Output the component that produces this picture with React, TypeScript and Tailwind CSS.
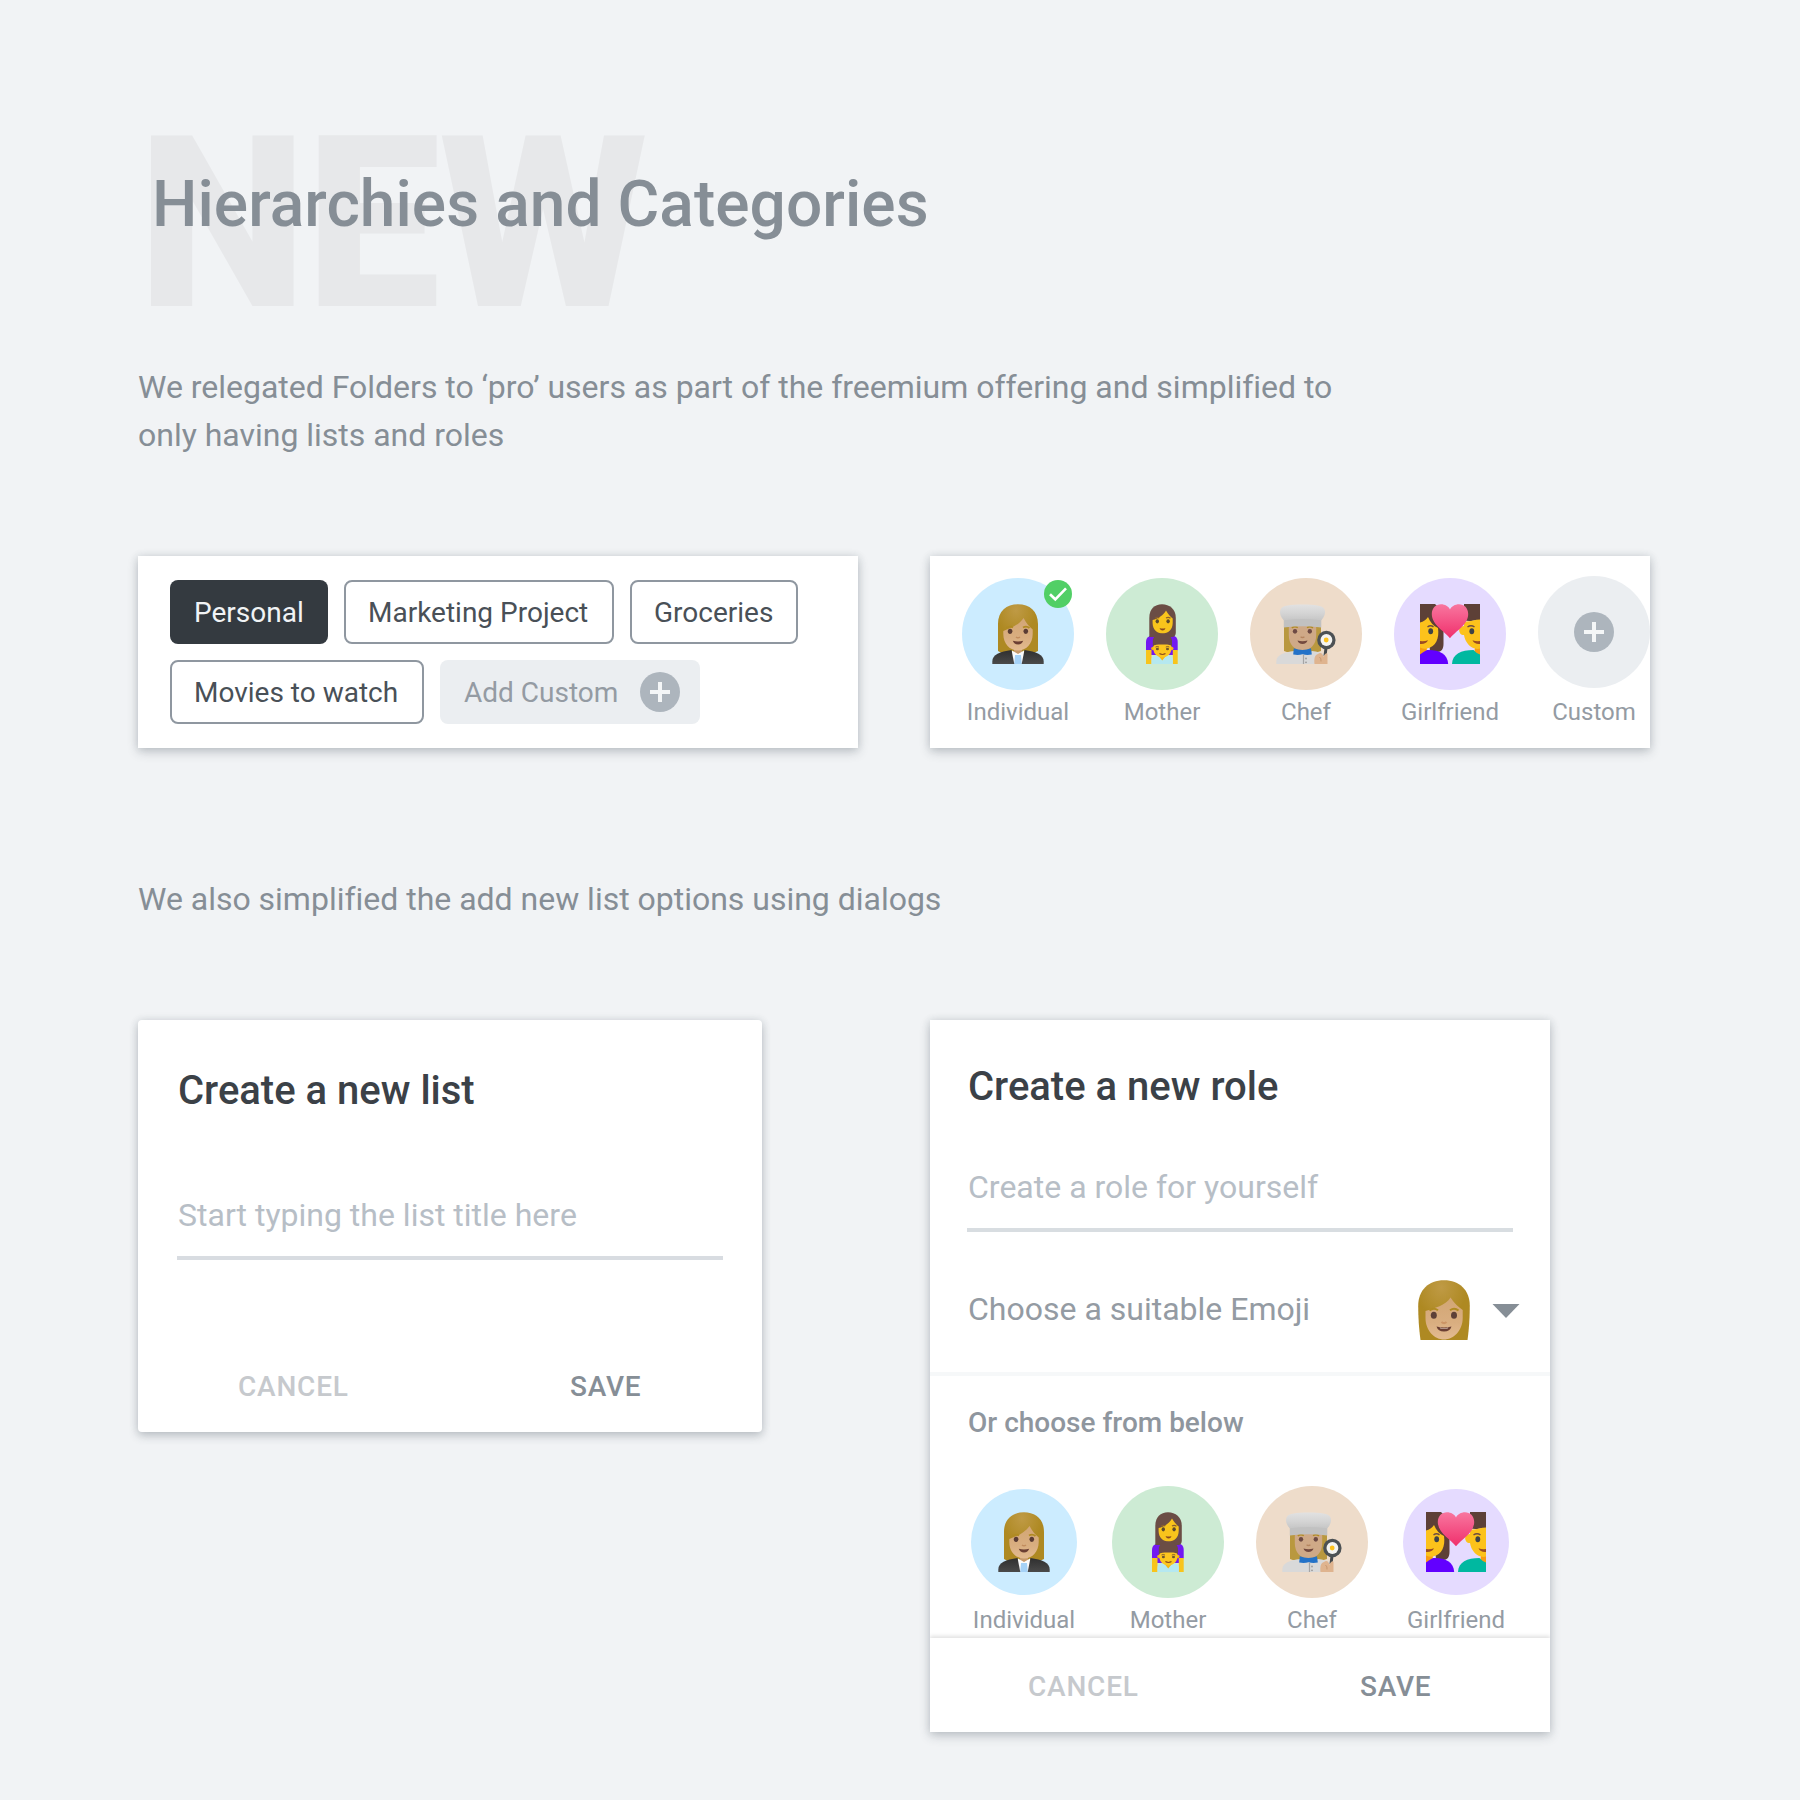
import type { ReactNode } from "react";

const cardShadow =
  "bg-white shadow-[0_4px_10px_rgba(52,62,75,0.24),0_0_8px_rgba(52,62,75,0.12)]";

function Defs() {
  return (
    <svg width="0" height="0" className="absolute">
      <defs>
        <radialGradient id="blonde" cx="0.45" cy="0.12" r="0.5">
          <stop offset="0" stopColor="#bf9a45" />
          <stop offset="1" stopColor="#ae8922" />
        </radialGradient>
        <linearGradient id="skin" x1="0" y1="0" x2="0" y2="1">
          <stop offset="0" stopColor="#d2a675" />
          <stop offset="0.6" stopColor="#d9ae80" />
          <stop offset="1" stopColor="#e3bb91" />
        </linearGradient>
        <linearGradient id="hat" x1="0" y1="0" x2="0" y2="1">
          <stop offset="0" stopColor="#e2e2e2" />
          <stop offset="0.6" stopColor="#d3d3d3" />
          <stop offset="1" stopColor="#c6c6c6" />
        </linearGradient>
        <linearGradient id="heart" x1="0" y1="0" x2="0" y2="1">
          <stop offset="0" stopColor="#f8769f" />
          <stop offset="1" stopColor="#f02f6c" />
        </linearGradient>
        <linearGradient id="suit" x1="0" y1="0" x2="0" y2="1">
          <stop offset="0" stopColor="#2f2f2f" />
          <stop offset="1" stopColor="#4a4a4a" />
        </linearGradient>
      </defs>
    </svg>
  );
}

function Emoji({ children }: { children: ReactNode }) {
  return (
    <svg viewBox="0 0 60 60" className="block size-[60px] shrink-0">
      {children}
    </svg>
  );
}

function OfficeWoman() {
  return (
    <Emoji>
      <path d="M10 47V20C10 7 18.500 0.200 30 0.200S50 7 50 20V47Q45 50 40 49H20Q14 50 10 47Z" fill="url(#blonde)" />
      <path d="M26 42H34V53H26Z" fill="#c79a6b" />
      <path d="M15.300 27C22 24.500 31 21 35.600 14C38 19 41.500 23 44.700 25.500V30C44.700 40 38 46.500 30 46.500S15.300 40 15.300 30Z" fill="url(#skin)" />
      <path d="M18.500 24Q21.500 21.500 25 23.500M35 23.500Q38.500 21.500 41.500 24" stroke="#b08b22" strokeWidth="1.800" fill="none" />
      <ellipse cx="22.100" cy="27.300" rx="2.300" ry="2.600" fill="#5a3c34" />
      <ellipse cx="37.800" cy="27.300" rx="2.300" ry="2.600" fill="#5a3c34" />
      <path d="M28 33Q30 34.600 32 33" stroke="#c28d5e" strokeWidth="1.600" fill="none" />
      <path d="M24.800 36.800Q30 38 35.200 36.800Q34 40.400 30 40.400T24.800 36.800Z" fill="#6b3f33" />
      <path d="M24 46.500L30 50L36 46.500L38 60H22Z" fill="#fbfbfb" />
      <path d="M27 51H33L33.800 60H26.200Z" fill="#a5d2f7" />
      <path d="M4.300 60V57.500C4.300 50.500 12 47.600 23.500 46L26.300 60Z" fill="url(#suit)" />
      <path d="M55.700 60V57.500C55.700 50.500 48 47.600 36.500 46L33.700 60Z" fill="url(#suit)" />
    </Emoji>
  );
}

function BlondeWoman() {
  return (
    <Emoji>
      <path d="M6.500 60C5 49 4.200 38 4.200 26C4.200 10 14.500 0.200 30 0.200S55.800 10 55.800 26C55.800 38 55 49 53.500 60Z" fill="url(#blonde)" />
      <path d="M11.500 31C20 28.500 32 25 36.500 17.500C40 23 45 27.500 48.700 30V38C48.700 51 39 59.500 30 59.500S11.500 51 11.500 38Z" fill="url(#skin)" />
      <path d="M15.500 30.600Q19.500 27 24 30.200M36 30.200Q40.500 27 44.500 30.600" stroke="#b08b22" strokeWidth="2" fill="none" />
      <ellipse cx="19.800" cy="35.200" rx="3" ry="3.500" fill="#5d4037" />
      <ellipse cx="40" cy="35.200" rx="3" ry="3.500" fill="#5d4037" />
      <path d="M27.500 42Q30 44.300 32.500 42" stroke="#cb9465" strokeWidth="2" fill="none" />
      <path d="M22.500 46.500Q30 48.600 37.500 46.500Q36 51.500 30 51.500T22.500 46.500Z" fill="#6b3f33" />
      <path d="M25.500 47.500Q30 48.600 34.500 47.500L33.500 48.400H26.500Z" fill="#f4e6dc" />
    </Emoji>
  );
}

function MotherAndSon() {
  return (
    <Emoji>
      <path d="M14 46V38C14 33 18 31 23 31H38C42.500 31 45.700 33 45.700 38V46L41 51H19Z" fill="#7218f2" />
      <path d="M17.300 33V14C17.300 5 22.500 0.200 30 0.200S43.800 5 43.800 14V29Q43.500 33 40 33Z" fill="#6b4d45" />
      <path d="M20.600 16C26 15 31.500 11 34 6.500C36 10 38.500 13 40.700 14.500V19C40.700 25.500 36 29.500 30.600 29.500S20.600 25.500 20.600 19Z" fill="#f8c41c" />
      <path d="M23 14.200Q25.300 12.600 27.300 14M34 14Q36.300 12.600 38.500 14.200" stroke="#8a5f2c" strokeWidth="1.100" fill="none" />
      <ellipse cx="25.300" cy="17.300" rx="1.700" ry="2.100" fill="#5c4a2c" />
      <ellipse cx="36.100" cy="17.300" rx="1.700" ry="2.100" fill="#5c4a2c" />
      <path d="M27.500 24Q30.600 25 33.500 24Q32.800 26.500 30.600 26.500T27.500 24Z" fill="#8a4a1e" />
      <path d="M14 46H19.500V60H14ZM40.800 46H45.700V60H40.800Z" fill="#f8c41c" />
      <path d="M19.500 60V55Q20 51.500 25 51H35.500Q40.300 51.500 40.800 55V60Z" fill="#b5e8f0" />
      <path d="M25 50H35.500L30.200 56.500Z" fill="#f8b80e" />
      <circle cx="21" cy="44.500" r="1.800" fill="#f3b50d" />
      <circle cx="39.700" cy="44.500" r="1.800" fill="#f3b50d" />
      <path d="M21.300 40H39.400V44.500C39.400 50 35 53.500 30.400 53.500S21.300 50 21.300 44.500Z" fill="#fcc61f" />
      <path d="M20.800 42.500V37C20.800 32.500 25 29.500 30.300 29.500S40 32.500 40 37V42.500C38.500 40.500 34 40.600 30.300 40.600S22.500 40.500 20.800 42.500Z" fill="#6b4d45" />
      <path d="M23.500 43Q25.400 41.900 27 43.100M33.800 43.100Q35.500 41.900 37.300 43" stroke="#7a5530" strokeWidth="0.900" fill="none" />
      <ellipse cx="25.400" cy="45" rx="1.500" ry="1.300" fill="#6b5430" />
      <ellipse cx="35.500" cy="45" rx="1.500" ry="1.300" fill="#6b5430" />
      <path d="M27.400 49.600Q30.400 51.400 33.500 49.600" stroke="#8a4a1e" strokeWidth="1.200" fill="none" />
    </Emoji>
  );
}

function Chef() {
  return (
    <Emoji>
      <path d="M8 47V22H45V47Q40 49 36 48H17Q12 49 8 47Z" fill="#b9983f" />
      <path d="M12.800 22H40.200V31C40.200 41 34 46.500 26.500 46.500S12.800 41 12.800 31Z" fill="#cfa987" />
      <path d="M15.800 23.800Q18.800 21.800 21.800 23.600M31 23.600Q34 21.800 37 23.800" stroke="#b08b22" strokeWidth="1.500" fill="none" />
      <ellipse cx="19" cy="27.300" rx="2.200" ry="2.400" fill="#6d4a44" />
      <ellipse cx="33.800" cy="27.300" rx="2.200" ry="2.400" fill="#6d4a44" />
      <path d="M24.600 32.800Q26.500 34.300 28.400 32.800" stroke="#b5855f" strokeWidth="1.400" fill="none" />
      <path d="M21.500 36.600Q26.500 38 31.500 36.600Q30.500 40 26.500 40T21.500 36.600Z" fill="#744a3f" />
      <path d="M7.800 23.500V14H45.300V23.500Q26.500 21 7.800 23.500Z" fill="#c1c1c1" />
      <path d="M7.800 16.300C4 12.500 3.300 8 4.800 5C6.800 1.300 14 0.400 26.500 0.400S46.300 1.300 48.300 5C49.800 8 49 12.500 45.300 16.300Q26.500 13.500 7.800 16.300Z" fill="url(#hat)" />
      <path d="M0.300 60V57.500C0.300 51 8 48.200 18 47L27 51L36 47C41 47.600 45 48.500 48 50L46 60Z" fill="#d9d9d9" />
      <path d="M27.500 51V60" stroke="#a5a5a5" strokeWidth="1.200" />
      <circle cx="30" cy="54.500" r="0.900" fill="#9a9a9a" />
      <circle cx="30" cy="58.300" r="0.900" fill="#9a9a9a" />
      <path d="M17.800 44.300Q26.500 47.600 35 44.300L35.800 50.500Q31 51.500 26.500 50.300Q22 51.500 17.200 50.500Z" fill="#2372c8" />
      <path d="M50 44L49 52" stroke="#45494c" strokeWidth="3" />
      <circle cx="50.400" cy="36" r="9.200" fill="#4c5154" />
      <circle cx="50.400" cy="36" r="5.900" fill="#f4f4f1" />
      <circle cx="50.200" cy="36" r="2.400" fill="#fcc11f" />
      <path d="M38.500 60C38 55.500 38.500 50.500 42 50C45 47.600 47 50.500 47.500 53C48.500 49.500 51 48.500 51.500 50V60Z" fill="#dfb48f" />
      <path d="M43.500 53Q45.500 54.500 45 57.500" stroke="#c79870" strokeWidth="1" fill="none" />
    </Emoji>
  );
}

function Couple() {
  return (
    <Emoji>
      <path d="M0 0H15C20 4 23.500 12 23.500 24V40C23.500 45 21.500 48 17 48H10L8 20H0Z" fill="#5d4037" />
      <path d="M0 18.500C3.500 17.500 6 16 8 13C10 18 13.500 22 18 24C19.500 34 16 43 7 44.500L6 49L0 52Z" fill="#fcc21b" />
      <path d="M0 43.500Q4 45.200 6.500 44.600L6 50L0 51.500Z" fill="#f79c12" />
      <path d="M7.500 23Q10.500 20.600 13.500 22.800" stroke="#6d4c41" strokeWidth="1.500" fill="none" />
      <ellipse cx="10.700" cy="27.200" rx="2.400" ry="3" fill="#3f4347" />
      <path d="M0 37Q4.500 37.500 8 36.300Q6 40.500 0 40Z" fill="#9a4c22" />
      <path d="M0 50.500Q3 48 7 46C18 45.500 27.500 49 28.200 60H0Z" fill="#6200ff" />
      <path d="M60 0H44V16C50 18.500 55 15.500 60 16Z" fill="#5d4037" />
      <path d="M60 15.500C55 15.500 50 18 44 17.500V22C40 22 38.500 25 39.500 28C40.200 30.500 42 31 44 31C45 38 50 43.500 55 44.500L54.500 50H60Z" fill="#fcc21b" />
      <path d="M54.800 44.500Q57.500 45.300 60 44.500V51H54.500Z" fill="#f79c12" />
      <path d="M47.500 23Q51 20.600 54.500 23" stroke="#6d4c41" strokeWidth="1.500" fill="none" />
      <ellipse cx="51.800" cy="27.200" rx="2.400" ry="3" fill="#3f4347" />
      <path d="M52.500 36.300Q56 37.500 60 37V40Q54.500 40.500 52.500 36.300Z" fill="#9a4c22" />
      <path d="M32 60C32.500 50 41 46 53.500 46Q56.500 49.500 60 50.500V60Z" fill="#00b8a0" />
      <path d="M30 34.300C25 27.500 11.800 21 11.800 10C11.800 4 16 0.300 21 0.300C25 0.300 28.500 2.400 30 5.500C31.500 2.400 35 0.300 39 0.300C44 0.300 48.200 4 48.200 10C48.200 21 35 27.500 30 34.300Z" fill="url(#heart)" />
    </Emoji>
  );
}

function PlusBadge() {
  return (
    <svg viewBox="0 0 40 40" className="block size-10 shrink-0">
      <circle cx="20" cy="20" r="20" fill="#adb5bd" />
      <path d="M20 10V30M10 20H30" stroke="#f4f6f7" strokeWidth="4" />
    </svg>
  );
}

function Role({ label, circle, children }: { label: string; circle: string; children: ReactNode }) {
  return (
    <div className="flex w-28 flex-col items-center gap-[10px]">
      <div className="flex size-28 items-center justify-center">
        <div className={`relative flex items-center justify-center rounded-full ${circle}`}>{children}</div>
      </div>
      <span className="text-2xl leading-6 whitespace-nowrap text-[#949ba3]">{label}</span>
    </div>
  );
}

function Chip({ className, label, children }: { className: string; label: string; children?: ReactNode }) {
  return (
    <div className={`flex h-16 items-center rounded-lg text-[28px] leading-8 whitespace-nowrap ${className}`}>
      <span className="pt-[2px]">{label}</span>
      {children}
    </div>
  );
}

const outlined = "border-2 border-[#8f97a0] px-[22px] text-[#495057]";

export default function App() {
  return (
    <div className="h-[1800px] w-[1800px] overflow-hidden bg-[#f1f3f5] pt-[104px] pl-[138px] font-[Roboto,sans-serif] text-[#868e96]">
      <Defs />
      <header className="grid h-60">
        <span className="text-[240px] leading-[240px] font-black tracking-[-0.8px] text-[#e7e8ea] [grid-area:1/1]">
          NEW
        </span>
        <h1 className="z-10 mt-[69px] ml-[14px] text-[64px] leading-[64px] font-medium tracking-[0.06px] [grid-area:1/1]">
          Hierarchies and Categories
        </h1>
      </header>

      <p className="mt-[19px] w-[1240px] text-[32px] leading-[48px] tracking-[-0.013px] [font-variant-ligatures:common-ligatures]">
        We relegated Folders to ‘pro’ users as part of the freemium offering and simplified to
        <br />
        only having lists and roles
      </p>

      <div className="mt-[97px] flex gap-[72px]">
        <section className={`flex h-48 w-[720px] flex-col gap-4 px-8 py-6 ${cardShadow}`}>
          <div className="flex gap-4">
            <Chip className="w-[158px] bg-[#343a40] px-6 text-[#f1f3f5]" label="Personal" />
            <Chip className={`w-[270px] ${outlined}`} label="Marketing Project" />
            <Chip className={`w-[168px] ${outlined}`} label="Groceries" />
          </div>
          <div className="flex gap-4">
            <Chip className={`w-[254px] ${outlined}`} label="Movies to watch" />
            <Chip className="w-[260px] justify-between bg-[#ebeef1] pr-5 pl-6 text-[#949ba3]" label="Add Custom">
              <PlusBadge />
            </Chip>
          </div>
        </section>

        <section className={`flex h-48 w-[720px] gap-8 pt-[22px] pl-8 ${cardShadow}`}>
          <Role label="Individual" circle="size-28 bg-[#ccecff]">
            <OfficeWoman />
            <svg viewBox="0 0 28 28" className="absolute top-[2px] right-[2px] size-7">
              <circle cx="14" cy="14" r="14" fill="#51cf66" />
              <path d="M6 14.200L11.300 19.300L22 8.300" stroke="#fff" strokeWidth="2.600" fill="none" />
            </svg>
          </Role>
          <Role label="Mother" circle="size-28 bg-[#cdebd4]">
            <MotherAndSon />
          </Role>
          <Role label="Chef" circle="size-28 bg-[#eedcca]">
            <Chef />
          </Role>
          <Role label="Girlfriend" circle="size-28 bg-[#e5dbff]">
            <Couple />
          </Role>
          <Role label="Custom" circle="size-28 -mt-1 bg-[#ebeef1]">
            <PlusBadge />
          </Role>
        </section>
      </div>

      <p className="mt-[127px] text-[32px] leading-[48px] tracking-[-0.013px] [font-variant-ligatures:common-ligatures]">
        We also simplified the add new list options using dialogs
      </p>

      <div className="mt-[97px] flex items-start gap-[168px]">
        <section className={`h-[412px] w-[624px] rounded pt-[47px] ${cardShadow}`}>
          <h2 className="pl-10 text-[40px] leading-[48px] font-medium text-[#3b4147]">Create a new list</h2>
          <p className="mt-20 pl-10 text-[32px] leading-10 text-[#b7bec6]">Start typing the list title here</p>
          <div className="mt-[21px] ml-[39px] h-1 w-[546px] bg-[#d8dce1]" />
          <div className="mt-[111px] flex pl-[100px] text-[28px] leading-8 font-medium tracking-[0.8px]">
            <span className="w-[332px] text-[#c6c9cd]">CANCEL</span>
            <span>SAVE</span>
          </div>
        </section>

        <section className={`h-[712px] w-[620px] pt-[43px] ${cardShadow}`}>
          <h2 className="pl-[38px] text-[40px] leading-[48px] font-medium text-[#3b4147]">Create a new role</h2>
          <p className="mt-14 pl-[38px] text-[32px] leading-10 text-[#b7bec6]">Create a role for yourself</p>
          <div className="mt-[21px] ml-[37px] h-1 w-[546px] bg-[#d8dde1]" />
          <div className="mt-12 flex items-center pl-[38px]">
            <span className="w-[446px] pb-[2px] text-[32px] leading-10 text-[#949ba3]">Choose a suitable Emoji</span>
            <BlondeWoman />
            <svg viewBox="0 0 28 14" className="mt-[2px] ml-[18px] h-[14px] w-7">
              <path d="M0.500 0H27.500L14 14Z" fill="#868e96" />
            </svg>
          </div>
          <div className="mt-8 h-1 bg-[#f6f8f9]" />
          <p className="mt-[31px] pl-[38px] text-[28px] leading-8 font-medium text-[#8f969e]">Or choose from below</p>
          <div className="mt-[47px] flex h-[152px] gap-8 pl-[38px]">
            <Role label="Individual" circle="size-[106px] bg-[#ccecff]">
              <OfficeWoman />
            </Role>
            <Role label="Mother" circle="size-28 bg-[#cdebd4]">
              <MotherAndSon />
            </Role>
            <Role label="Chef" circle="size-28 bg-[#eedcca]">
              <Chef />
            </Role>
            <Role label="Girlfriend" circle="size-[106px] bg-[#e5dbff]">
              <Couple />
            </Role>
          </div>
          <div className="flex h-[94px] bg-white pt-[33px] pl-[98px] text-[28px] leading-8 font-medium tracking-[0.8px] shadow-[0_-2px_4px_rgba(0,0,0,0.12)] [clip-path:inset(-8px_0_0_0)]">
            <span className="w-[332px] text-[#c6c9cd]">CANCEL</span>
            <span>SAVE</span>
          </div>
        </section>
      </div>
    </div>
  );
}
